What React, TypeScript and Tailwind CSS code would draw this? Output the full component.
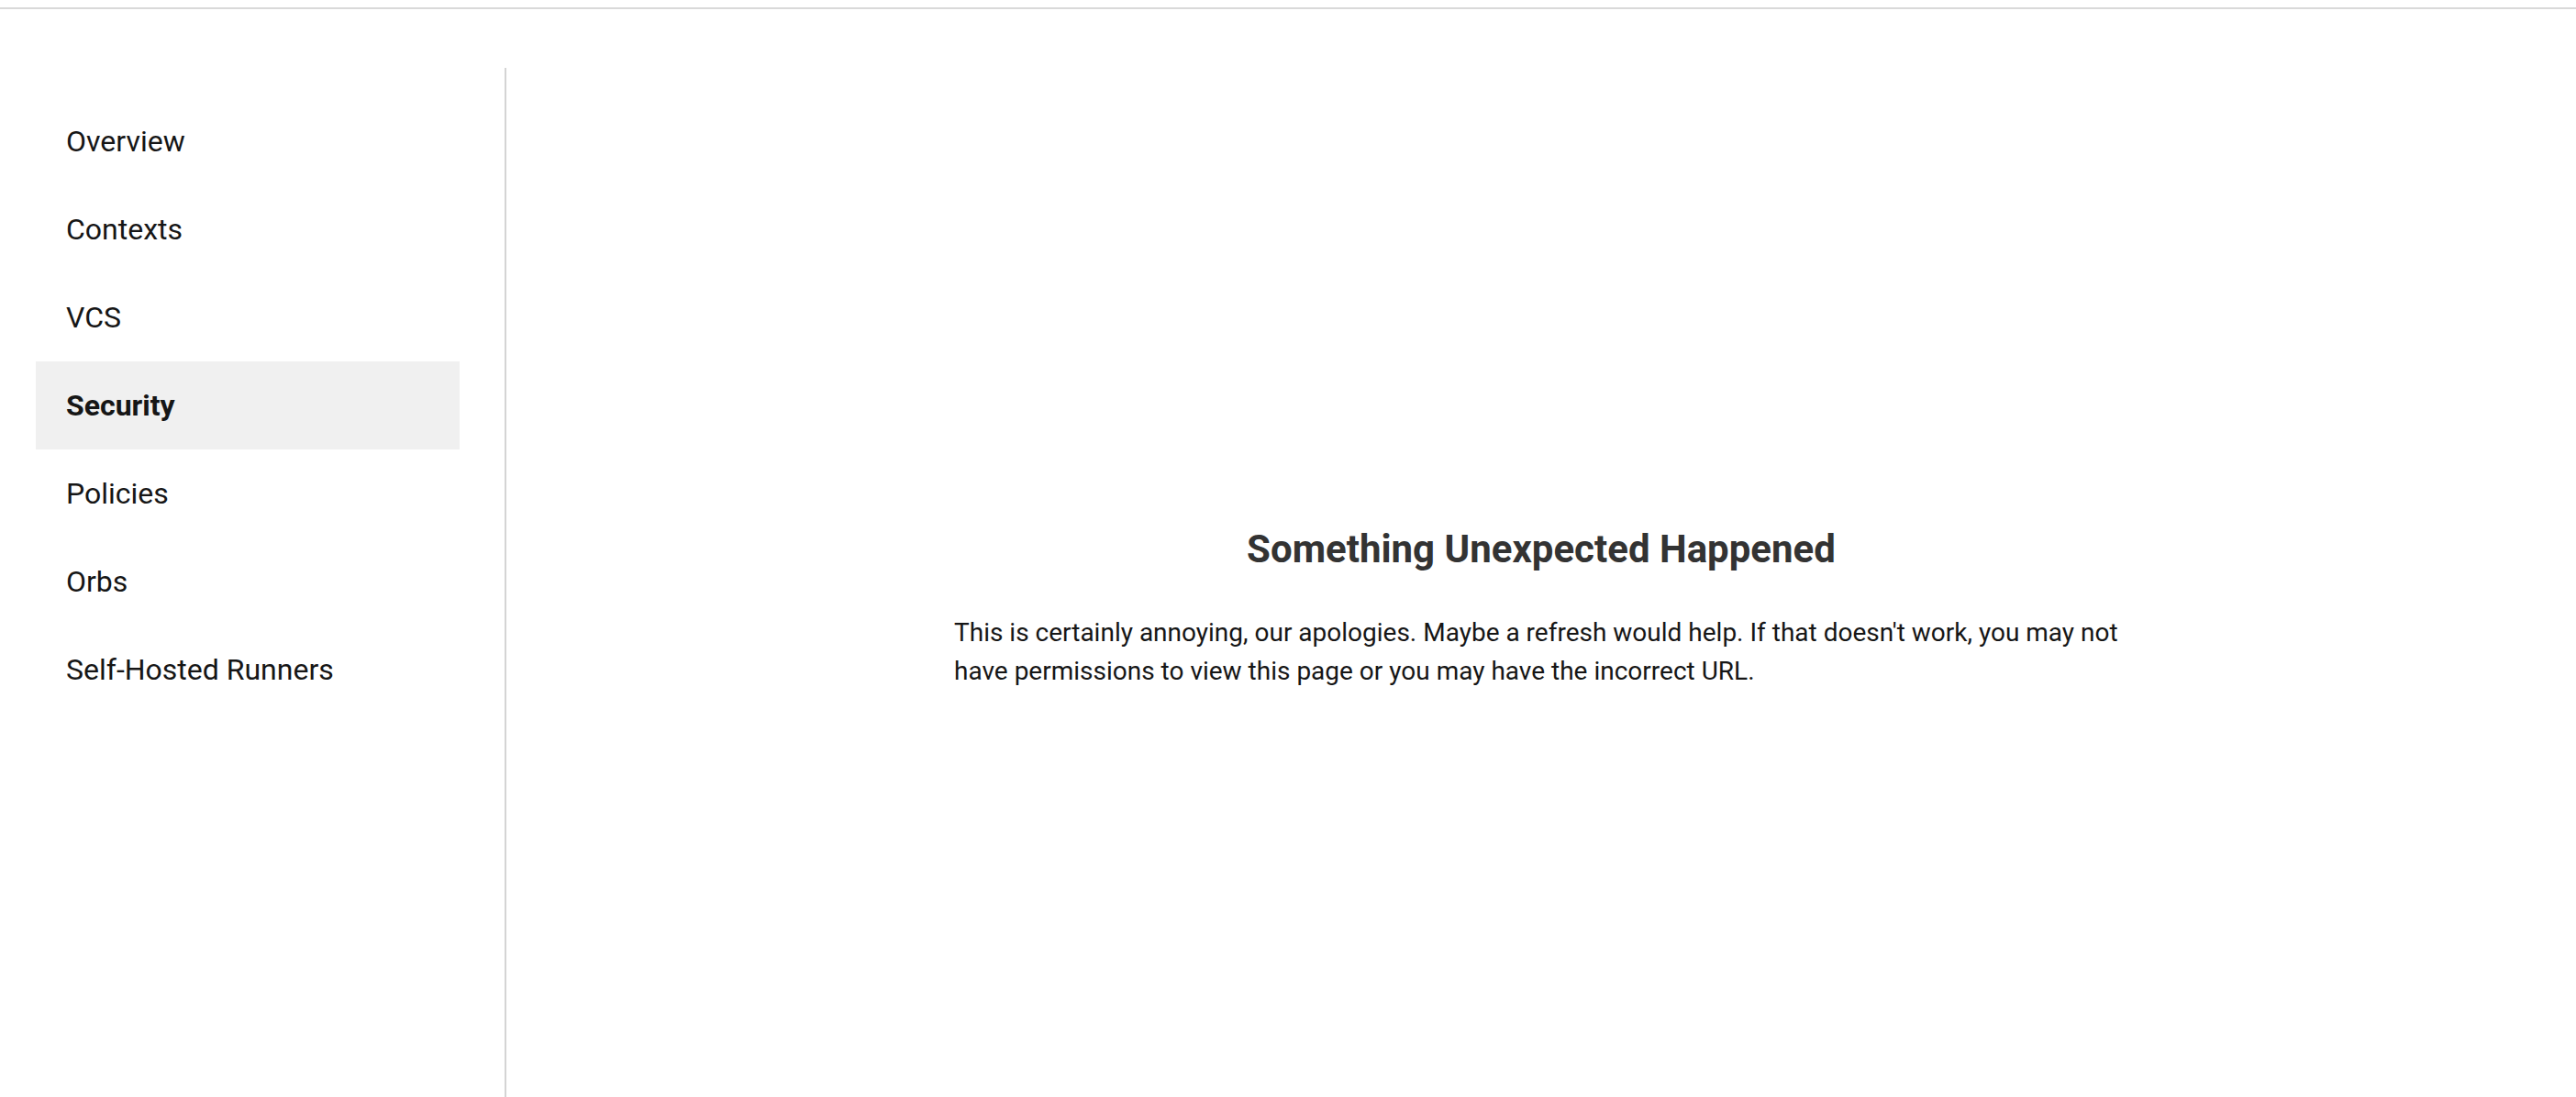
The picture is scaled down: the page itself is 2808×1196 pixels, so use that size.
const NAV_ITEMS = ['Overview', 'Contexts', 'VCS', 'Security', 'Policies', 'Orbs', 'Self-Hosted Runners']

const ACTIVE = 'Security'

function Sidebar() {
  return (
    <nav className="w-[552px] shrink-0 border-r-2 border-[#d4d4d4] pt-[32px] pl-[39px] pr-[49px]">
      <ul>
        {NAV_ITEMS.map((item) => {
          const active = item === ACTIVE
          return (
            <li
              key={item}
              className={
                active
                  ? 'h-[96px] flex items-center pl-[33px] bg-[#f0f0f0] font-bold text-[#161616]'
                  : 'h-[96px] flex items-center pl-[33px] text-[#161616]'
              }
            >
              {item}
            </li>
          )
        })}
      </ul>
    </nav>
  )
}

function ErrorMessage() {
  return (
    <div className="flex-1 flex justify-center pt-[501px]">
      <div className="w-[1280px]">
        <h1 className="text-center text-[42px] leading-[48px] font-bold text-[#333333]">
          Something Unexpected Happened
        </h1>
        <p className="mt-[46px] text-[28px] leading-[42px] text-[#161616]">
          This is certainly annoying, our apologies. Maybe a refresh would help. If that doesn't work, you may not
          have permissions to view this page or you may have the incorrect URL.
        </p>
      </div>
    </div>
  )
}

export default function App() {
  return (
    <div className="h-[1196px] overflow-hidden bg-white font-['Roboto',sans-serif] text-[32px]">
      {/* top bar edge */}
      <div className="h-[10px] border-b-2 border-[#d9d9d9]" />
      <div className="flex h-[1186px] pt-[64px]">
        <Sidebar />
        <ErrorMessage />
      </div>
    </div>
  )
}
